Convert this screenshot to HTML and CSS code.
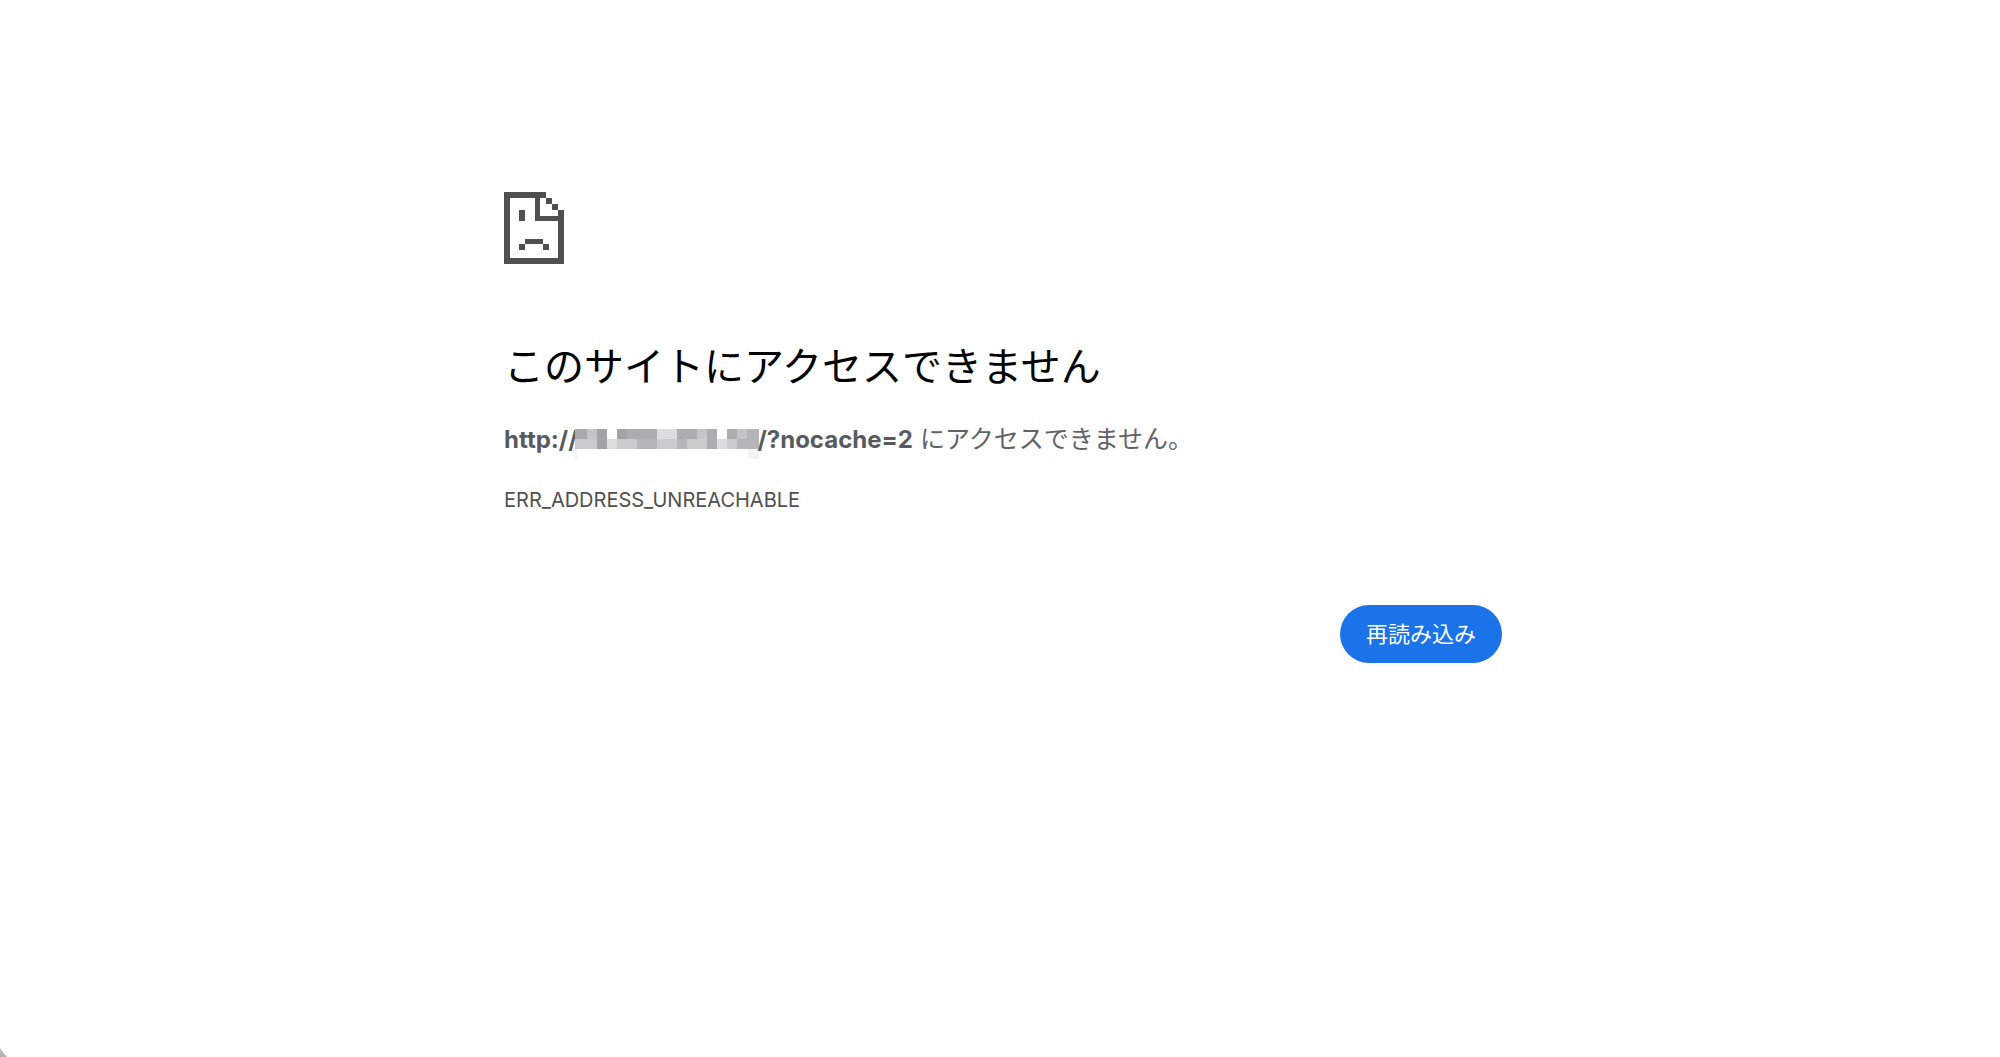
FILE: index.html
```html
<!DOCTYPE html>
<html lang="ja">
<head>
    <meta charset="utf-8">
    <meta name="viewport" content="width=device-width, initial-scale=1">
    <title>このサイトにアクセスできません</title>
    <link rel="stylesheet" href="styles.css">
</head>
<body>
    <main class="error-page">
        <!-- sad page icon -->
        <svg class="icon" viewBox="0 0 60 72" shape-rendering="crispEdges" aria-hidden="true">
            <path d="M0 0H42V6H36V24H54V18H60V72H0ZM6 6V66H54V29H31V6Z" fill-rule="evenodd"/>
            <path d="M42 6h6v6h-6zM48 12h6v6h-6z"/>
            <path d="M15 18h6v11h-6zM21 47h18v5h-18zM15 52h6v6h-6zM39 52h6v6h-6z"/>
        </svg>

        <h1 class="title">このサイトにアクセスできません</h1>
        <p class="summary">
            <strong>http://<svg class="mosaic" viewBox="0 0 184 30" shape-rendering="crispEdges" aria-hidden="true">
                <path fill="#f4f4f5" d="M0 0h2v30H0zM173 20h11v10h-11z"/>
                <path fill="#a9a9ac" d="M0 0h12v10H0zM142 0h10v10h-10z"/>
                <path fill="#c5c5c9" d="M12 0h10v10H12zM122 0h10v10h-10zM162 0h10v10h-10z"/>
                <path fill="#a3a4a8" d="M22 0h10v20H22zM42 0h10v10H42z"/>
                <path fill="#adadb1" d="M52 0h30v10H52zM102 0h20v10h-20zM132 0h10v20h-10zM152 0h10v10h-10z"/>
                <path fill="#dddde0" d="M82 0h20v10H82zM32 10h10v10H32zM142 10h10v10h-10z"/>
                <path fill="#fff" d="M32 0h10v10H32zM142 0h10v10h-10z"/>
                <path fill="#cbcbce" d="M0 10h22v10H0zM42 10h20v10H42zM82 10h20v10H82zM112 10h20v10h-20zM152 10h10v10h-10z"/>
                <path fill="#b5b5b9" d="M62 10h20v10H62zM102 10h10v10h-10zM162 10h22v10h-22zM172 0h12v10h-12z"/>
            </svg>/?nocache=2</strong>
            にアクセスできません。
        </p>
        <p class="error-code">ERR_ADDRESS_UNREACHABLE</p>

        <div class="buttons">
            <button type="button" class="reload">再読み込み</button>
        </div>
    </main>

    <!-- window corner -->
    <svg class="corner" viewBox="0 0 7 9" aria-hidden="true">
        <path d="M0 0Q3 5 7 9H0Z"/>
    </svg>
</body>
</html>
```

FILE: styles.css
```css
body {
    margin: 0;
    padding: 192px 24px 0 30px;
    background: #fff;
    color: #5f6368;
    font-family: Inter, "Noto Sans CJK JP", sans-serif;
}

.error-page {
    max-width: 998px;
    margin: 0 auto;
}

.icon {
    display: block;
    width: 60px;
    height: 72px;
    fill: #505050;
}

.title {
    margin: 73px 0 0;
    color: #000;
    font-size: 40px;
    font-weight: 400;
    line-height: 60px;
}

.summary {
    margin: 22px 0 0;
    font-size: 25px;
    line-height: 40px;
}

.summary strong {
    color: #575b5f;
    font-size: 24px;
    font-weight: 700;
}

.mosaic {
    width: 184px;
    height: 30px;
    margin: 0 -2px;
    vertical-align: -11px;
}

.error-code {
    margin: 24px 0 0;
    color: #505050;
    font-size: 20px;
    line-height: 32px;
}

/* buttons */
.buttons {
    display: flex;
    justify-content: flex-end;
    margin-top: 89px;
}

.reload {
    padding: 13px 26px;
    border: 0;
    border-radius: 30px;
    background: #1a73e8;
    color: #fff;
    font-family: inherit;
    font-size: 22px;
    line-height: 32px;
    cursor: pointer;
}

.corner {
    position: fixed;
    left: 0;
    bottom: 0;
    width: 7px;
    height: 9px;
    fill: #b5b5b5;
}
```
